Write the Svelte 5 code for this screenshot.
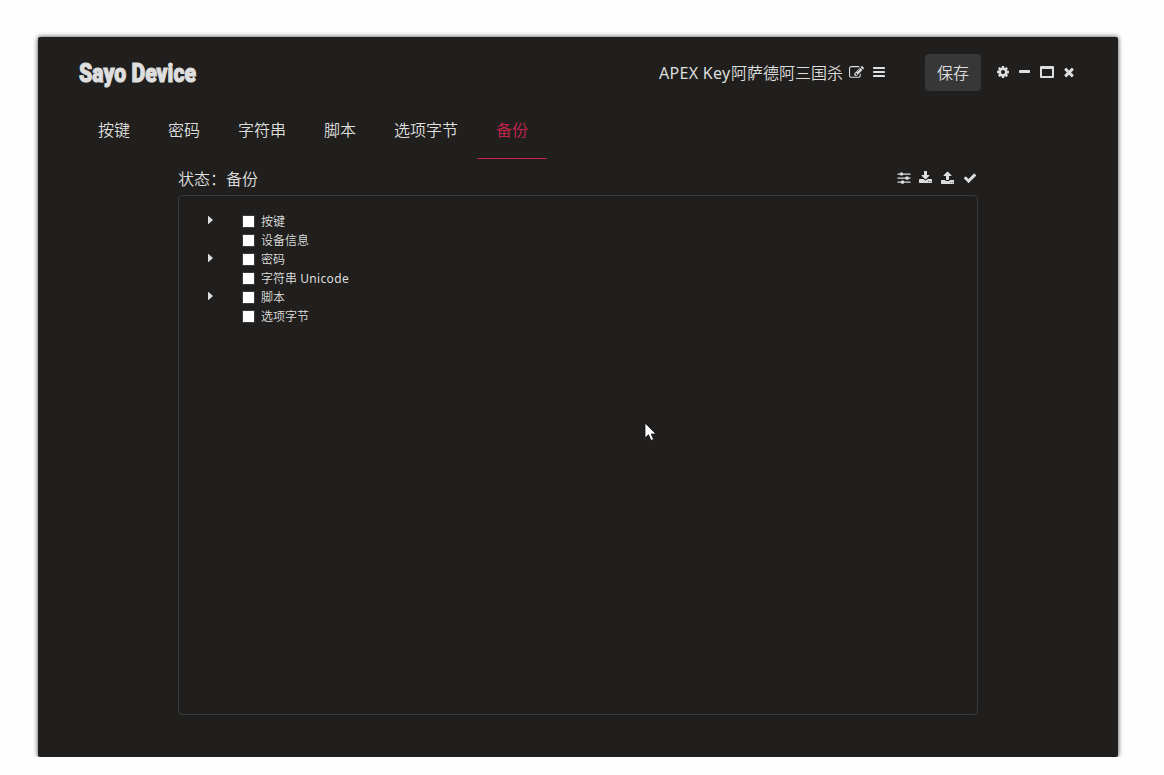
<script>
  const tabs = ['按键', '密码', '字符串', '脚本', '选项字节', '备份'];
  let active = $state('备份');

  const rows = [
    { label: '按键', branch: true },
    { label: '设备信息', branch: false },
    { label: '密码', branch: true },
    { label: '字符串', latin: 'Unicode', branch: false },
    { label: '脚本', branch: true },
    { label: '选项字节', branch: false }
  ];
</script>

<div class="window">
  <header>
    <svg class="brand" width="122" height="36" viewBox="0 0 122 36">
      <text x="2" y="26.5" textLength="117" lengthAdjust="spacingAndGlyphs">Sayo Device</text>
    </svg>
    <div class="device">
      <span class="name"><span class="latin">APEX Key</span>阿萨德阿三国杀</span>
      <svg class="edit" width="15" height="15" viewBox="0 0 1792 1792"><path d="M888 1184l116-116-152-152-116 116v56h96v96h56zm440-720q-16-16-33 1l-350 350q-17 17-1 33t33-1l350-350q17-17 1-33zm80 594v190q0 119-84.500 203.500t-203.500 84.500h-832q-119 0-203.500-84.500t-84.500-203.500v-832q0-119 84.500-203.500t203.500-84.500h832q63 0 117 25 15 7 18 23 3 17-9 29l-49 49q-14 14-32 8-23-6-45-6h-832q-66 0-113 47t-47 113v832q0 66 47 113t113 47h832q66 0 113-47t47-113v-126q0-13 9-22l64-64q15-15 35-7t20 29zm-96-738l288 288-672 672h-288v-288zm444 132l-92 92-288-288 92-92q28-28 68-28t68 28l152 152q28 28 28 68t-28 68z" /></svg>
      <svg class="bars" width="12" height="10" viewBox="0 0 12 10"><rect width="12" height="2" rx=".4" /><rect y="4" width="12" height="2" rx=".4" /><rect y="8" width="12" height="2" rx=".4" /></svg>
    </div>
    <button class="save">保存</button>
    <div class="controls">
      <svg width="14" height="14" viewBox="0 0 1792 1792"><path d="M1152 896q0-106-75-181t-181-75-181 75-75 181 75 181 181 75 181-75 75-181zm512-109v222q0 12-8 23t-20 13l-185 28q-19 54-39 91 35 50 107 138 10 12 10 25t-9 23q-27 37-99 108t-94 71q-12 0-26-9l-138-108q-44 23-91 38-16 136-29 186-7 28-36 28h-222q-14 0-24.500-8.500t-11.500-21.500l-28-184q-49-16-90-37l-141 107q-10 9-25 9-14 0-25-11-126-114-165-168-7-10-7-23 0-12 8-23 15-21 51-66.500t54-70.500q-27-50-41-99l-183-27q-13-2-21-12.500t-8-23.500v-222q0-12 8-23t19-13l186-28q14-46 39-92-40-57-107-138-10-12-10-24 0-10 9-23 26-36 98.500-107.500t94.500-71.500q13 0 26 10l138 107q44-23 91-38 16-136 29-186 7-28 36-28h222q14 0 24.500 8.500t11.500 21.500l28 184q49 16 90 37l142-107q9-9 24-9 13 0 25 10 129 119 165 170 7 8 7 22 0 12-8 23-15 21-51 66.500t-54 70.500q26 50 41 98l183 28q13 2 21 12.500t8 23.500z" /></svg>
      <svg class="min" width="11" height="14" viewBox="0 0 11 14"><rect y="5" width="11" height="3" rx=".7" /></svg>
      <svg class="max" width="14" height="14" viewBox="0 0 14 14"><path fill-rule="evenodd" d="M1 1h12a1 1 0 0 1 1 1v10a1 1 0 0 1-1 1H1a1 1 0 0 1-1-1V2a1 1 0 0 1 1-1zM2 4v7h10V4z" /></svg>
      <svg class="close" width="14" height="14" viewBox="0 0 1792 1792"><path d="M1490 1322q0 40-28 68l-136 136q-28 28-68 28t-68-28l-294-294-294 294q-28 28-68 28t-68-28l-136-136q-28-28-28-68t28-68l294-294-294-294q-28-28-28-68t28-68l136-136q28-28 68-28t68 28l294 294 294-294q28-28 68-28t68 28l136 136q28 28 28 68t-28 68l-294 294 294 294q28 28 28 68z" /></svg>
    </div>
  </header>

  <nav>
    {#each tabs as tab}
      <button class="tab" class:active={tab === active} onclick={() => (active = tab)}>{tab}</button>
    {/each}
  </nav>

  <main>
    <div class="status">
      <span>状态：备份</span>
      <div class="tools">
        <svg width="14" height="14" viewBox="0 0 14 14"><path d="M.5 2.500h13v1.200H.500zM.500 6.500h13v1.200H.500zM.500 10.500h13v1.200H.500z" /><rect x="3" y="1.400" width="3" height="3.200" rx=".8" /><rect x="8.500" y="5.500" width="3" height="3.200" rx=".8" /><rect x="4" y="9.500" width="3" height="3.200" rx=".8" /></svg>
        <svg width="14" height="14" viewBox="0 0 1792 1792"><path d="M1280 1344q0-26-19-45t-45-19-45 19-19 45 19 45 45 19 45-19 19-45zm256 0q0-26-19-45t-45-19-45 19-19 45 19 45 45 19 45-19 19-45zm128-224v320q0 40-28 68t-68 28h-1472q-40 0-68-28t-28-68v-320q0-40 28-68t68-28h465l135 136q58 56 136 56t136-56l136-136h464q40 0 68 28t28 68zm-325-569q17 41-14 70l-448 448q-18 19-45 19t-45-19l-448-448q-31-29-14-70 17-39 59-39h256v-448q0-26 19-45t45-19h256q26 0 45 19t19 45v448h256q42 0 59 39z" /></svg>
        <svg width="14" height="14" viewBox="0 0 1792 1792"><path d="M1280 1472q0-26-19-45t-45-19-45 19-19 45 19 45 45 19 45-19 19-45zm256 0q0-26-19-45t-45-19-45 19-19 45 19 45 45 19 45-19 19-45zm128-224v320q0 40-28 68t-68 28h-1472q-40 0-68-28t-28-68v-320q0-40 28-68t68-28h427q21 56 70.500 92t110.500 36h256q61 0 110.500-36t70.500-92h427q40 0 68 28t28 68zm-325-648q-17 40-59 40h-256v448q0 26-19 45t-45 19h-256q-26 0-45-19t-19-45v-448h-256q-42 0-59-40-17-39 14-69l448-448q18-19 45-19t45 19l448 448q31 30 14 69z" /></svg>
        <svg width="14" height="14" viewBox="0 0 1792 1792"><path d="M1671 566q0 40-28 68l-724 724-136 136q-28 28-68 28t-68-28l-136-136-362-362q-28-28-28-68t28-68l136-136q28-28 68-28t68 28l294 295 656-657q28-28 68-28t68 28l136 136q28 28 28 68z" /></svg>
      </div>
    </div>
    <div class="panel">
      {#each rows as row}
        <div class="row">
          <span class="arrow">
            {#if row.branch}
              <svg width="5" height="8" viewBox="0 0 5 8"><path d="M0 .3L.5 0 5 4 .5 8 0 7.700z" /></svg>
            {/if}
          </span>
          <span class="box"></span>
          <span>{row.label}{#if row.latin}{' '}<span class="small-latin">{row.latin}</span>{/if}</span>
        </div>
      {/each}
    </div>
  </main>
</div>

<svg class="pointer" width="13" height="20" viewBox="0 0 13 20"><path d="M1 1v15l3.500-3.300L7 18.500l2.600-1.100L7.200 12H12z" fill="#fff" stroke="#111" stroke-width=".8" /></svg>

<style>
  :global(body) {
    background: #fefefe;
    overflow: hidden;
  }
  .window {
    box-sizing: border-box;
    width: 1080px;
    height: 720px;
    margin: 37px 0 0 38px;
    background: #201f1d;
    border-radius: 2px;
    box-shadow: 0 0 5px rgba(0, 0, 0, 0.75);
    color: #dedede;
    font: 16px/24px 'Noto Sans', 'Noto Sans CJK SC', sans-serif;
    font-weight: 350;
  }
  svg {
    fill: #dedede;
    display: block;
    flex: none;
    overflow: visible;
  }
  header {
    display: flex;
    align-items: center;
    height: 71px;
    padding: 0 42px 0 39px;
  }
  .brand text {
    font: 900 26px Roboto, sans-serif;
    stroke: #dedede;
    stroke-width: 1.1px;
  }
  .device {
    display: flex;
    align-items: center;
    margin-left: auto;
  }
  .name {
    white-space: nowrap;
    padding-top: 1px;
  }
  .latin,
  .small-latin {
    font-weight: 400;
  }
  .latin {
    display: inline-block;
    width: 72px;
    letter-spacing: 0.3px;
  }
  .small-latin {
    letter-spacing: 0.35px;
  }
  .edit {
    margin: 0 0 1px 6px;
  }
  .bars {
    margin: 0 0 1px 9px;
  }
  button {
    border: 0;
    background: none;
    color: inherit;
    font: inherit;
  }
  .save {
    width: 56px;
    height: 37px;
    margin-left: 40px;
    padding: 0;
    border-radius: 4px;
    background: #373737;
  }
  .controls {
    display: flex;
    align-items: center;
    margin-left: 15px;
    padding-bottom: 1px;
  }
  .min {
    margin-left: 9px;
  }
  .max {
    margin-left: 10px;
  }
  .close {
    margin-left: 8px;
  }
  nav {
    display: flex;
    height: 51px;
    padding-left: 41px;
  }
  .tab {
    box-sizing: border-box;
    height: 51px;
    padding: 0 19px 6px;
    border-bottom: 1px solid transparent;
  }
  .tab.active {
    color: #c7254e;
    border-bottom-color: #c7254e;
  }
  main {
    width: 800px;
    margin-left: 140px;
  }
  .status {
    box-sizing: border-box;
    display: flex;
    justify-content: space-between;
    align-items: center;
    height: 36px;
    padding-top: 4px;
  }
  .tools {
    display: flex;
    gap: 8px;
    padding: 0 1px 2px 0;
  }
  .panel {
    box-sizing: border-box;
    height: 520px;
    padding: 16px 28px;
    border: 1px solid #3a3a3a;
    border-radius: 4px;
  }
  .row {
    display: flex;
    align-items: center;
    height: 19px;
    font-size: 12px;
    line-height: 19px;
    white-space: nowrap;
  }
  .arrow {
    width: 35px;
    padding: 0 0 3px 1px;
    box-sizing: border-box;
  }
  .box {
    box-sizing: border-box;
    width: 13px;
    height: 13px;
    margin-right: 6px;
    border: 1px solid #3a3a3a;
    background: #fff;
  }
  .pointer {
    position: absolute;
    left: 644px;
    top: 422px;
  }
</style>
